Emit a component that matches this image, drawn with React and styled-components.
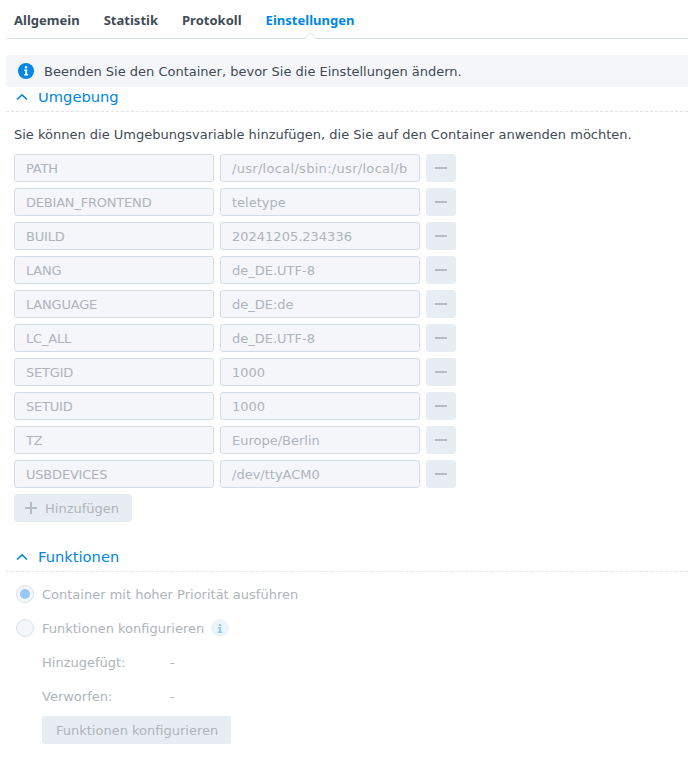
import React from "react";
import styled, { createGlobalStyle } from "styled-components";

const Global = createGlobalStyle`
  html, body { margin: 0; padding: 0; background: #fff; }
  body { font-family: "DejaVu Sans", "Noto Sans", sans-serif; font-size: 13px; color: #414b55; }
`;

const Page = styled.div`
  width: 688px;
  height: 760px;
  overflow: hidden;
  padding-left: 6px;
  box-sizing: border-box;
`;

const Tabs = styled.div`
  position: relative;
  height: 38px;
  display: flex;
  gap: 24px;
  padding-left: 8px;
  border-bottom: 1px solid #d9e1e9;
`;

const Tab = styled.div`
  font-family: "Noto Sans", sans-serif;
  font-weight: 700;
  font-size: 13px;
  letter-spacing: 0.015px;
  line-height: 41px;
  color: ${(p) => (p.$active ? "#0086e5" : "#414b55")};
  position: relative;
  ${(p) =>
    p.$active &&
    `&::after {
      content: "";
      position: absolute;
      left: 50%;
      bottom: -5px;
      width: 10px;
      height: 10px;
      margin-left: -5px;
      background: #fff;
      border-left: 1px solid #d9e1e9;
      border-top: 1px solid #d9e1e9;
      transform: rotate(45deg) scale(.72);
    }`}
`;

const Banner = styled.div`
  margin-top: 16px;
  height: 32px;
  background: #f4f6fa;
  border-radius: 3px 0 0 3px;
  display: flex;
  align-items: center;
  gap: 10px;
  padding-left: 12px;
  font-size: 13px;
`;

const Scroll = styled.div`
  margin-top: 6px;
  height: 667px;
  overflow: hidden;
`;

const Inner = styled.div`
  margin-top: -13px;
`;

const SectionHead = styled.div`
  height: 32px;
  box-sizing: border-box;
  display: flex;
  align-items: center;
  gap: 10px;
  padding: 2px 0 0 10px;
  font-size: 14.7px;
  color: #0086e5;
  border-bottom: 1px dashed #dfe5eb;
`;

const Intro = styled.div`
  padding: 15px 0 0 8px;
  line-height: 16px;
`;

const Rows = styled.div`
  margin-top: 11px;
  padding-left: 8px;
  display: flex;
  flex-direction: column;
  gap: 6px;
`;

const Row = styled.div`
  display: flex;
  gap: 6px;
`;

const Field = styled.div`
  width: 200px;
  height: 28px;
  box-sizing: border-box;
  background: #f4f6fa;
  border: 1px solid #d3dde8;
  border-radius: 3px;
  padding: 0 12px 0 11px;
  line-height: 27px;
  color: #aeb4ba;
`;

const FieldText = styled.div`
  white-space: nowrap;
  overflow: hidden;
  height: 26px;
  letter-spacing: ${(p) => p.$spacing || "0"};
`;

const IconBtn = styled.div`
  width: 30px;
  height: 28px;
  background: #e8edf4;
  border-radius: 3px;
  display: flex;
  align-items: center;
  justify-content: center;
`;

const Btn = styled.div`
  display: inline-flex;
  align-items: center;
  gap: 8px;
  height: 28px;
  padding: 0 13px 0 11px;
  background: #e8edf4;
  border-radius: 3px;
  color: #aeb4ba;
  font-size: 13px;
`;

const AddWrap = styled.div`
  margin: 6px 0 0 8px;
`;

const Gap = styled.div`
  height: 18px;
`;

const Options = styled.div`
  padding: 5px 0 0 10px;
  display: flex;
  flex-direction: column;
`;

const OptRow = styled.div`
  height: 34px;
  display: flex;
  align-items: center;
  gap: 8px;
  color: #aeb4ba;
`;

const Radio = styled.div`
  width: 16px;
  height: 16px;
  border-radius: 50%;
  background: #f4f6fa;
  border: 1px solid #d9e1ee;
  display: flex;
  align-items: center;
  justify-content: center;
  &::after {
    content: "";
    display: ${(p) => (p.$on ? "block" : "none")};
    width: 10px;
    height: 10px;
    border-radius: 50%;
    background: #96c8f5;
  }
`;

const InfoDot = styled.div`
  width: 18px;
  height: 18px;
  border-radius: 50%;
  background: #eaf4fd;
  display: flex;
  align-items: center;
  justify-content: center;
  margin-left: -1px;
`;

const Meta = styled.div`
  height: 34px;
  padding-left: 26px;
  display: flex;
  align-items: center;
  color: #aeb4ba;
`;

const MetaLabel = styled.div`
  width: 128px;
`;

const CfgWrap = styled.div`
  padding-left: 26px;
  margin-top: 3px;
`;

const CfgBtn = styled(Btn)`
  padding: 0 13px 0 14px;
`;

const Chevron = () => (
  <svg width="12" height="8" viewBox="0 0 12 8" fill="none">
    <path d="M1 6.5 L6 1.8 L11 6.5" stroke="#0086e5" strokeWidth="1.6" />
  </svg>
);

const InfoIcon = () => (
  <svg width="16" height="16" viewBox="0 0 16 16">
    <circle cx="8" cy="8" r="8" fill="#0086e5" />
    <rect x="6.9" y="3.2" width="2.3" height="2.2" fill="#fff" />
    <path d="M6.2 6.6h3v4.6h1v1.4H6.2v-1.4h1v-3.2h-1z" fill="#fff" />
  </svg>
);

const SmallI = () => (
  <svg width="6" height="9" viewBox="0 0 6 9">
    <rect x="2" y="0" width="2" height="2" fill="#92c8f3" />
    <path d="M1 3h3v4.5h1.2V9H.8V7.5H2V4.4H1z" fill="#92c8f3" />
  </svg>
);

const Minus = () => (
  <svg width="12" height="2" viewBox="0 0 12 2">
    <rect width="12" height="2" fill="#b4bac2" />
  </svg>
);

const Plus = () => (
  <svg width="12" height="12" viewBox="0 0 12 12">
    <path d="M5 0h2v5h5v2H7v5H5V7H0V5h5z" fill="#b4bac2" />
  </svg>
);

const vars = [
  ["PATH", "/usr/local/sbin:/usr/local/b", "0.3px"],
  ["DEBIAN_FRONTEND", "teletype"],
  ["BUILD", "20241205.234336"],
  ["LANG", "de_DE.UTF-8"],
  ["LANGUAGE", "de_DE:de"],
  ["LC_ALL", "de_DE.UTF-8"],
  ["SETGID", "1000"],
  ["SETUID", "1000"],
  ["TZ", "Europe/Berlin"],
  ["USBDEVICES", "/dev/ttyACM0"],
];

export default function App() {
  return (
    <Page>
      <Global />
      <Tabs>
        <Tab>Allgemein</Tab>
        <Tab>Statistik</Tab>
        <Tab>Protokoll</Tab>
        <Tab $active>Einstellungen</Tab>
      </Tabs>
      <Banner>
        <InfoIcon />
        Beenden Sie den Container, bevor Sie die Einstellungen ändern.
      </Banner>
      <Scroll>
        <Inner>
          <SectionHead>
            <Chevron />
            Umgebung
          </SectionHead>
          <Intro>Sie können die Umgebungsvariable hinzufügen, die Sie auf den Container anwenden möchten.</Intro>
          <Rows>
            {vars.map(([k, v, spacing]) => (
              <Row key={k}>
                <Field><FieldText $spacing="-0.2px">{k}</FieldText></Field>
                <Field><FieldText $spacing={spacing}>{v}</FieldText></Field>
                <IconBtn>
                  <Minus />
                </IconBtn>
              </Row>
            ))}
          </Rows>
          <AddWrap>
            <Btn>
              <Plus />
              Hinzufügen
            </Btn>
          </AddWrap>
          <Gap />
          <SectionHead>
            <Chevron />
            Funktionen
          </SectionHead>
          <Options>
            <OptRow>
              <Radio $on />
              Container mit hoher Priorität ausführen
            </OptRow>
            <OptRow>
              <Radio />
              Funktionen konfigurieren
              <InfoDot><SmallI /></InfoDot>
            </OptRow>
            <Meta>
              <MetaLabel>Hinzugefügt:</MetaLabel>-
            </Meta>
            <Meta>
              <MetaLabel>Verworfen:</MetaLabel>-
            </Meta>
            <CfgWrap>
              <CfgBtn>Funktionen konfigurieren</CfgBtn>
            </CfgWrap>
          </Options>
        </Inner>
      </Scroll>
    </Page>
  );
}
